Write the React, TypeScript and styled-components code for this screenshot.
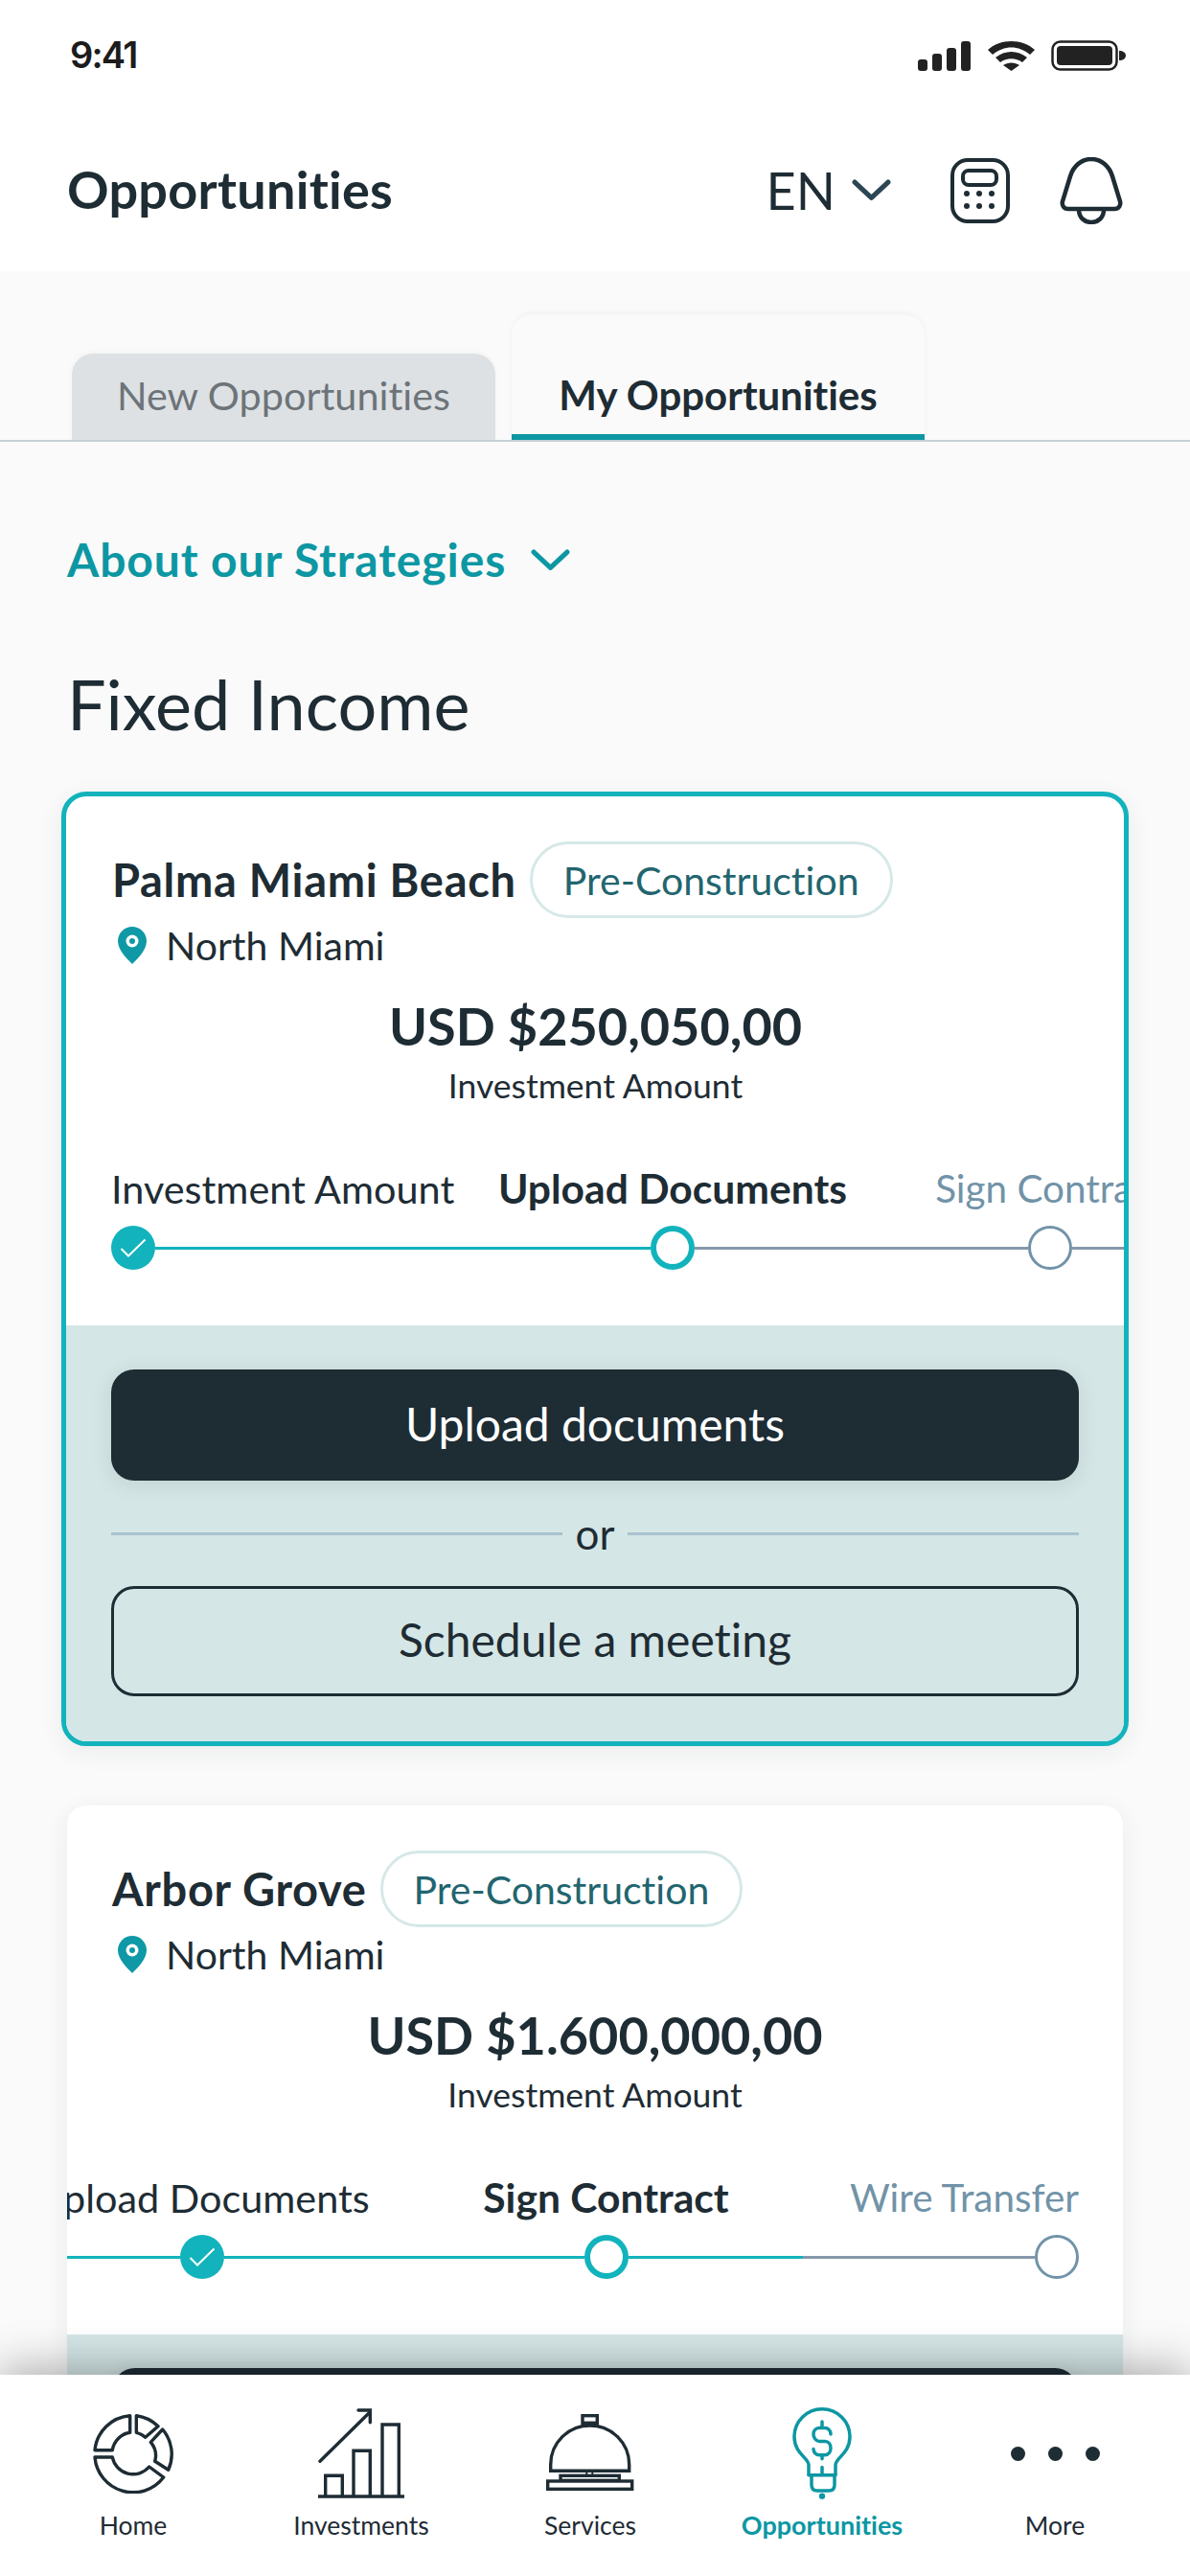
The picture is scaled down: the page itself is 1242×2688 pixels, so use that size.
import React from 'react'
import styled, { createGlobalStyle } from 'styled-components'

const INK = '#1e2c34'
const TEAL = '#12b3bc'
const TEAL_DARK = '#0c97a3'
const SLATE = '#7193a8'
const FONT = "Lato, 'Open Sans', sans-serif"

const GlobalStyle = createGlobalStyle`
  html, body {
    margin: 0;
    padding: 0;
    background: #fafafa;
  }
  * {
    box-sizing: border-box;
  }
`

const Screen = styled.div`
  width: 1242px;
  height: 2688px;
  display: flex;
  flex-direction: column;
  overflow: hidden;
  background: #fafafa;
  color: ${INK};
  font-family: ${FONT};
  font-variant-ligatures: none;
`

const StatusBar = styled.div`
  height: 114px;
  flex: none;
  background: #fff;
  display: flex;
  justify-content: space-between;
  align-items: flex-start;
  padding: 35px 67px 0 73px;
`

const Clock = styled.span`
  font-family: Inter, sans-serif;
  font-size: 38px;
  line-height: 44px;
  font-weight: 600;
  letter-spacing: -1.8px;
  color: #1c1c1c;
`

const StatusIcons = styled.div`
  display: flex;
  align-items: center;
  gap: 17px;
  margin-top: 7px;
`

const Header = styled.header`
  height: 169px;
  flex: none;
  background: #fff;
  display: flex;
  align-items: center;
  padding: 0 70px;
`

const PageTitle = styled.h1`
  margin: 0 auto 2px 0;
  font-size: 54px;
  font-weight: 700;
  line-height: 64px;
  letter-spacing: 0.25px;
`

const Lang = styled.div`
  display: flex;
  align-items: center;
  gap: 17px;
  font-size: 54px;
  line-height: 64px;
  margin-right: 62px;
`

const HeaderIcons = styled.div`
  display: flex;
  align-items: center;
  gap: 52px;
`

const TabStrip = styled.div`
  flex: none;
  display: flex;
  align-items: flex-end;
  gap: 17px;
  height: 178px;
  padding-left: 75px;
  border-bottom: 2px solid #c5d0d5;
`

const TabButton = styled.div<{ $active?: boolean }>`
  display: flex;
  align-items: center;
  justify-content: center;
  border-radius: 22px 22px 0 0;
  ${p =>
    p.$active
      ? `
    width: 431px;
    height: 131px;
    padding-top: 43px;
    font-size: 42px;
    font-weight: 700;
    background: #fafafa;
    border-bottom: 6px solid ${TEAL_DARK};
    box-shadow: 0 -2px 6px rgba(0, 0, 0, 0.04);
  `
      : `
    width: 442px;
    height: 90px;
    padding-bottom: 4px;
    font-size: 41.4px;
    color: #6d7479;
    background: #dde1e4;
    box-shadow: 0 -2px 6px rgba(0, 0, 0, 0.03);
  `}
`

const Body = styled.main`
  flex: 1;
  min-height: 0;
  overflow: hidden;
`

const AboutLink = styled.div`
  display: flex;
  align-items: center;
  gap: 26px;
  margin: 95px 0 0 70px;
  color: ${TEAL_DARK};
  font-size: 48px;
  line-height: 56px;
  font-weight: 700;
  letter-spacing: 0.9px;
`

const SectionTitle = styled.h2`
  margin: 82px 0 0 70px;
  font-size: 72px;
  line-height: 80px;
  font-weight: 400;
`

const CardList = styled.div`
  display: flex;
  flex-direction: column;
  gap: 62px;
  padding: 52px 64px 0;
`

const Card = styled.section<{ $selected?: boolean }>`
  background: #fff;
  overflow: hidden;
  border-radius: ${p => (p.$selected ? '26px' : '20px')};
  box-shadow: 0 6px 26px rgba(30, 44, 52, 0.07);
  border: ${p => (p.$selected ? `5px solid ${TEAL}` : 'none')};
  margin: ${p => (p.$selected ? '0' : '0 6px')};
`

const CardTop = styled.div<{ $selected?: boolean }>`
  padding: 47px 47px 0 ${p => (p.$selected ? 48 : 47)}px;
`

const TitleRow = styled.div`
  display: flex;
  align-items: center;
  gap: 14px;
  height: 80px;
`

const CardTitle = styled.h3`
  margin: 0;
  font-size: 47px;
  line-height: 56px;
  font-weight: 700;
  letter-spacing: 0.7px;
`

const Chip = styled.span`
  display: flex;
  align-items: center;
  height: 80px;
  padding: 0 32px;
  border: 3px solid #d6e8e8;
  border-radius: 40px;
  font-size: 41px;
  color: #22656f;
`

const LocationRow = styled.div`
  display: flex;
  align-items: center;
  gap: 20px;
  height: 56px;
  font-size: 41px;
  padding-left: 6px;
`

const Amount = styled.div`
  margin-top: 25px;
  text-align: center;
  font-size: 54px;
  line-height: 64px;
  font-weight: 700;
`

const AmountCaption = styled.div`
  margin-top: 8px;
  text-align: center;
  font-size: 35.5px;
  line-height: 44px;
`

const StepperViewport = styled.div`
  overflow: hidden;
  margin-top: 60px;
  padding-bottom: 58px;
`

const StepperTrack = styled.div<{ $offset: number }>`
  display: flex;
  width: max-content;
  margin-left: ${p => p.$offset}px;
`

const Step = styled.div<{ $width: number }>`
  flex: none;
  width: ${p => p.$width}px;
`

const labelSizes: Record<string, number> = { done: 41.4, current: 42.6, pending: 40.4 }

const StepLabel = styled.div<{ $align: string; $tone: string }>`
  height: 50px;
  margin-bottom: 14px;
  font-size: ${p => labelSizes[p.$tone]}px;
  line-height: 50px;
  white-space: nowrap;
  display: flex;
  justify-content: ${p => p.$align};
  font-weight: ${p => (p.$tone === 'current' ? 700 : 400)};
  color: ${p => (p.$tone === 'pending' ? SLATE : INK)};
`

const NodeRow = styled.div`
  display: flex;
  align-items: center;
  height: 46px;
`

const Segment = styled.span<{ $state: string }>`
  flex: 1;
  height: 3px;
  background: ${p => (p.$state === 'done' ? TEAL : '#8698aa')};
`

const NodeDot = styled.span<{ $state: string }>`
  flex: none;
  width: 46px;
  height: 46px;
  border-radius: 50%;
  display: flex;
  align-items: center;
  justify-content: center;
  background: ${p => (p.$state === 'done' ? TEAL : '#fff')};
  border: ${p =>
    p.$state === 'current' ? `6px solid ${TEAL}` : p.$state === 'pending' ? `3px solid ${SLATE}` : 'none'};
`

const ActionPanel = styled.div<{ $top: number }>`
  background: #d5e6e6;
  padding: ${p => p.$top}px 47px 47px;
`

const PrimaryButton = styled.div`
  height: 116px;
  padding-bottom: 3px;
  border-radius: 24px;
  background: #1e2c34;
  color: #fff;
  display: flex;
  align-items: center;
  justify-content: center;
  font-size: 48px;
  box-shadow: 0 4px 22px rgba(30, 44, 52, 0.1);
`

const OrRow = styled.div`
  display: flex;
  align-items: center;
  gap: 14px;
  height: 110px;
  font-size: 44px;
`

const OrLine = styled.span`
  flex: 1;
  height: 3px;
  background: #a9c2cf;
`

const OutlineButton = styled.div`
  height: 115px;
  padding-bottom: 4px;
  border-radius: 24px;
  border: 3px solid #1e2c34;
  display: flex;
  align-items: center;
  justify-content: center;
  font-size: 48px;
`

const TabBar = styled.nav`
  flex: none;
  height: 210px;
  background: #fff;
  position: relative;
  z-index: 2;
  box-shadow: 0 -6px 44px rgba(0, 0, 0, 0.32);
  display: grid;
  grid-template-columns: 240px 236px 242px 242px 244px;
  padding: 32px 0 0 19px;
`

const TabItem = styled.div<{ $active?: boolean }>`
  display: flex;
  flex-direction: column;
  align-items: center;
  color: ${p => (p.$active ? TEAL_DARK : INK)};
  font-weight: ${p => (p.$active ? 700 : 400)};
`

const TabIcon = styled.div`
  height: 100px;
  display: flex;
  align-items: center;
  justify-content: center;
`

const TabLabel = styled.span<{ $active?: boolean }>`
  margin-top: 8px;
  font-size: ${p => (p.$active ? 27 : 26.5)}px;
  line-height: 34px;
`

const MoreDots = styled.div`
  display: flex;
  gap: 24px;
`

const MoreDot = styled.span`
  width: 15px;
  height: 15px;
  border-radius: 50%;
  background: ${INK};
`

function SignalIcon() {
  return (
    <svg width="56" height="31" viewBox="0 0 56 31" fill="#222">
      <rect x="0" y="19" width="10" height="12" rx="3" />
      <rect x="15" y="13" width="10" height="18" rx="3" />
      <rect x="30" y="7" width="10" height="24" rx="3" />
      <rect x="45" y="0" width="10" height="31" rx="3" />
    </svg>
  )
}

function WifiIcon() {
  return (
    <svg width="49" height="31" viewBox="0 0 49 31" fill="#222">
      <path d="M0 9C13-3 36-3 49 9L44 14C32 4 17 4 5 14Z" />
      <path d="M8 17C18 9 31 9 41 17L36 22C29 17 20 17 13 22Z" />
      <path d="M16 25C21 21.5 28 21.5 33 25L24.5 31Z" />
    </svg>
  )
}

function BatteryIcon() {
  return (
    <svg width="78" height="32" viewBox="0 0 78 32">
      <rect x="1.5" y="1.5" width="67" height="29" rx="8" fill="none" stroke="#222" strokeWidth="2.5" />
      <rect x="6" y="6" width="58" height="20" rx="4" fill="#222" />
      <path d="M71 11C75 11 78 13 78 16C78 19 75 21 71 21Z" fill="#222" />
    </svg>
  )
}

function Chevron({ color, width }: { color: string; width: number }) {
  return (
    <svg width={width} height={width * 0.55} viewBox="0 0 40 22" fill="none">
      <path d="M3 3L20 19L37 3" stroke={color} strokeWidth="5" strokeLinecap="round" strokeLinejoin="round" />
    </svg>
  )
}

function CalculatorIcon() {
  return (
    <svg width="62" height="68" viewBox="0 0 62 68" fill="none" stroke={INK} strokeWidth="4">
      <rect x="2" y="2" width="58" height="64" rx="16" />
      <rect x="13" y="13" width="35" height="15" rx="6" />
      <g fill={INK} stroke="none">
        <circle cx="17" cy="37" r="3" />
        <circle cx="30" cy="37" r="3" />
        <circle cx="43" cy="37" r="3" />
        <circle cx="17" cy="50" r="3" />
        <circle cx="30" cy="50" r="3" />
        <circle cx="43" cy="50" r="3" />
      </g>
    </svg>
  )
}

function BellIcon() {
  return (
    <svg width="66" height="70" viewBox="0 0 66 70" fill="none" stroke={INK} strokeWidth="4.5">
      <path d="M33 2C22 2 14 10 11 20L3 46C2 50 4 54 9 54H57C62 54 64 50 63 46L55 20C52 10 44 2 33 2Z" />
      <path d="M20 55C20 63 26 68 33 68C40 68 46 63 46 55" />
    </svg>
  )
}

function PinIcon() {
  return (
    <svg width="30" height="39" viewBox="0 0 30 39">
      <path d="M15 0C6.7 0 0 6.7 0 15C0 24 9 33 15 39C21 33 30 24 30 15C30 6.7 23.3 0 15 0Z" fill="#0f99a6" />
      <circle cx="15" cy="15" r="6.5" fill="#fff" />
      <circle cx="15" cy="15" r="3" fill="#0f99a6" />
    </svg>
  )
}

function CheckMark() {
  return (
    <svg width="28" height="20" viewBox="0 0 28 20" fill="none">
      <path d="M1.5 11L9 18.5L26.5 1.5" stroke="#fff" strokeWidth="2" />
    </svg>
  )
}

function HomeIcon() {
  return (
    <svg width="84" height="84" viewBox="-42 -42 84 84" fill="none" stroke={INK} strokeWidth="3.4" strokeLinejoin="round">
      <path d="M-3.3-39.3A40 40 0 0 0-40-3.3H-21.7A22 22 0 0 1-3.3-21.7Z" />
      <path d="M3.3-39.3A40 40 0 0 1 26-28.3L12.7-16.7A22 22 0 0 0 3.3-21.7Z" />
      <path d="M30.7-25A40 40 0 0 1 36.7 17.3L22.7 8.3A22 22 0 0 0 18.3-11.7Z" />
      <path d="M31.7 25A40 40 0 0 1-40 4H-21.7A22 22 0 0 0 16.7 14Z" />
    </svg>
  )
}

function InvestmentsIcon() {
  return (
    <svg width="96" height="100" viewBox="0 0 96 100" fill="none" stroke={INK} strokeWidth="3.4">
      <path d="M3 95H93" />
      <path d="M10.7 95V73.3H28.3V95" />
      <path d="M40 95V47.3H57.3V95" />
      <path d="M70 95V20H87.3V95" />
      <path d="M5 58.3L57.3 6.7" strokeLinecap="round" />
      <path d="M45 5H57.3V17.7" strokeLinecap="round" />
    </svg>
  )
}

function ServicesIcon() {
  return (
    <svg width="114" height="100" viewBox="0 10 114 100" fill="none" stroke={INK} strokeWidth="3.4">
      <rect x="49" y="20.7" width="15.3" height="7.6" />
      <path d="M56.7 28.3V31" />
      <path d="M15.7 78.3V71.7C15.7 49 34 31 56.7 31C79.4 31 97.7 49 97.7 71.7V78.3Z" />
      <path d="M53.3 78.3V83.3M59.3 78.3V83.3" strokeWidth="2" />
      <rect x="26" y="83.3" width="61.3" height="5" />
      <rect x="12.7" y="89" width="88" height="8.3" />
    </svg>
  )
}

function OpportunitiesIcon() {
  return (
    <svg width="78" height="100" viewBox="0 0 78 100" fill="none" stroke={TEAL_DARK} strokeWidth="3.5" strokeLinecap="round">
      <path d="M25 72V62C25 55 10 50 10 32.7A29 29 0 0 1 68 32.7C68 50 53 55 53 62V72" />
      <path d="M25 72.7H53" />
      <path d="M28 73V83C28 87 30 89 34 89H46C50 89 52 87 52 83V73" />
      <circle cx="39" cy="94.7" r="1.4" fill={TEAL_DARK} />
      <path d="M48 30C48 26 45 23.5 42 23.5H36C32.5 23.5 30 26.5 30 30C30 33.5 32.5 37.5 36 37.5H42C45.5 37.5 48 40.5 48 44.5C48 48.5 45.5 51.7 42 51.7H36C33 51.7 30 49 30 45.5" />
      <path d="M39 17V23M39 52V55.7M39 64.5V72" />
    </svg>
  )
}

type StepData = {
  label: string
  width: number
  align: string
  tone: string
  node: string
  left?: string
  right?: string
}

type CardData = {
  title: string
  amount: string
  offset: number
  panelTop: number
  selected?: boolean
  steps: StepData[]
}

const cards: CardData[] = [
  {
    title: 'Palma Miami Beach',
    amount: 'USD $250,050,00',
    offset: 47,
    panelTop: 46,
    selected: true,
    steps: [
      { label: 'Investment Amount', width: 391, align: 'flex-start', tone: 'done', node: 'done', right: 'done' },
      { label: 'Upload Documents', width: 390, align: 'center', tone: 'current', node: 'current', left: 'done', right: 'pending' },
      { label: 'Sign Contract', width: 398, align: 'center', tone: 'pending', node: 'pending', left: 'pending', right: 'pending' }
    ]
  },
  {
    title: 'Arbor Grove',
    amount: 'USD $1.600,000,00',
    offset: -75,
    panelTop: 35,
    steps: [
      { label: 'Upload Documents', width: 432, align: 'center', tone: 'done', node: 'done', left: 'done', right: 'done' },
      { label: 'Sign Contract', width: 411, align: 'center', tone: 'current', node: 'current', left: 'done', right: 'done' },
      { label: 'Wire Transfer', width: 288, align: 'flex-end', tone: 'pending', node: 'pending', left: 'pending' }
    ]
  }
]

const navItems = [
  { label: 'Home', icon: <HomeIcon /> },
  { label: 'Investments', icon: <InvestmentsIcon /> },
  { label: 'Services', icon: <ServicesIcon /> },
  { label: 'Opportunities', icon: <OpportunitiesIcon />, active: true },
  {
    label: 'More',
    icon: (
      <MoreDots>
        <MoreDot />
        <MoreDot />
        <MoreDot />
      </MoreDots>
    )
  }
]

function OpportunityCard({ card }: { card: CardData }) {
  return (
    <Card $selected={card.selected}>
      <CardTop $selected={card.selected}>
        <TitleRow>
          <CardTitle>{card.title}</CardTitle>
          <Chip>Pre-Construction</Chip>
        </TitleRow>
        <LocationRow>
          <PinIcon />
          North Miami
        </LocationRow>
        <Amount>{card.amount}</Amount>
        <AmountCaption>Investment Amount</AmountCaption>
      </CardTop>
      <StepperViewport>
        <StepperTrack $offset={card.offset}>
          {card.steps.map(step => (
            <Step key={step.label} $width={step.width}>
              <StepLabel $align={step.align} $tone={step.tone}>
                {step.label}
              </StepLabel>
              <NodeRow>
                {step.left && <Segment $state={step.left} />}
                <NodeDot $state={step.node}>{step.node === 'done' && <CheckMark />}</NodeDot>
                {step.right && <Segment $state={step.right} />}
              </NodeRow>
            </Step>
          ))}
        </StepperTrack>
      </StepperViewport>
      <ActionPanel $top={card.panelTop}>
        <PrimaryButton>Upload documents</PrimaryButton>
        <OrRow>
          <OrLine />
          or
          <OrLine />
        </OrRow>
        <OutlineButton>Schedule a meeting</OutlineButton>
      </ActionPanel>
    </Card>
  )
}

export default function App() {
  return (
    <Screen>
      <GlobalStyle />
      <StatusBar>
        <Clock>9:41</Clock>
        <StatusIcons>
          <SignalIcon />
          <WifiIcon />
          <BatteryIcon />
        </StatusIcons>
      </StatusBar>
      <Header>
        <PageTitle>Opportunities</PageTitle>
        <Lang>
          EN
          <Chevron color="#2d4655" width={41} />
        </Lang>
        <HeaderIcons>
          <CalculatorIcon />
          <BellIcon />
        </HeaderIcons>
      </Header>
      <TabStrip>
        <TabButton>New Opportunities</TabButton>
        <TabButton $active>My Opportunities</TabButton>
      </TabStrip>
      <Body>
        <AboutLink>
          About our Strategies
          <Chevron color={TEAL_DARK} width={41} />
        </AboutLink>
        <SectionTitle>Fixed Income</SectionTitle>
        <CardList>
          {cards.map(card => (
            <OpportunityCard key={card.title} card={card} />
          ))}
        </CardList>
      </Body>
      <TabBar>
        {navItems.map(item => (
          <TabItem key={item.label} $active={item.active}>
            <TabIcon>{item.icon}</TabIcon>
            <TabLabel $active={item.active}>{item.label}</TabLabel>
          </TabItem>
        ))}
      </TabBar>
    </Screen>
  )
}
